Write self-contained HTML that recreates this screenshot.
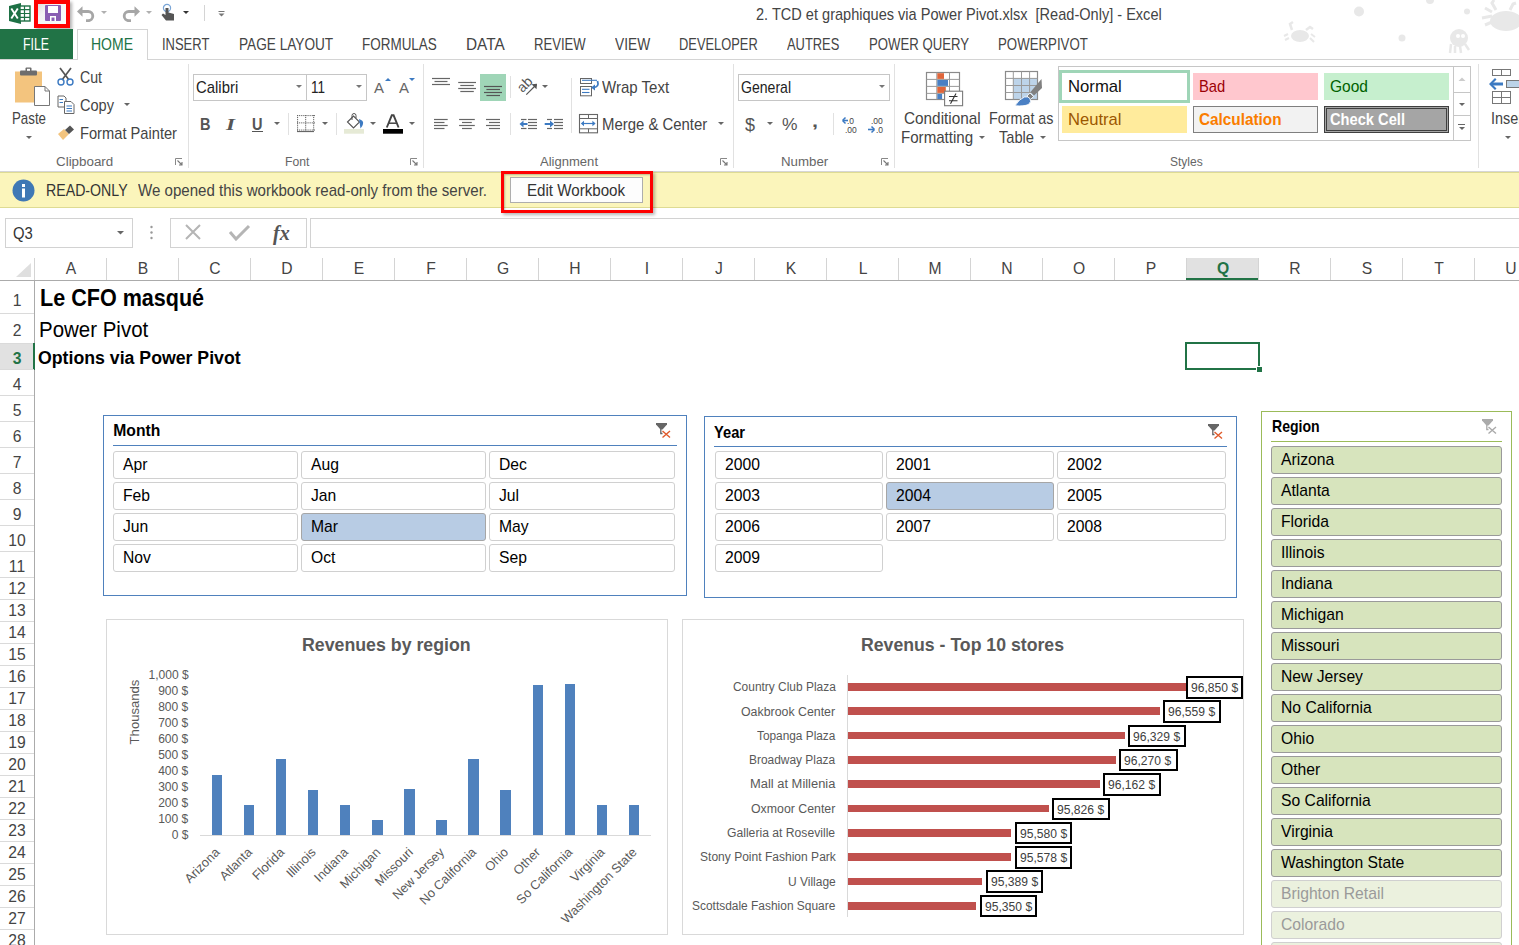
<!DOCTYPE html>
<html><head><meta charset="utf-8"><style>
html,body{margin:0;padding:0;width:1519px;height:945px;overflow:hidden;background:#fff;position:relative;font-family:"Liberation Sans",sans-serif;}
.t{position:absolute;white-space:pre;line-height:1;}
</style></head><body>
<svg style="position:absolute;left:1280px;top:0px;" width="239" height="56" viewBox="0 0 239 56">
<g fill="#e8e8e8">
<circle cx="79" cy="11.5" r="5"/>
<circle cx="122" cy="38" r="3.5"/>
<circle cx="150" cy="0" r="4"/>
<circle cx="187" cy="11.5" r="3"/>
<!-- crab1 -->
<ellipse cx="20" cy="36" rx="9" ry="6"/>
<path d="M8 34 L4 36 M9 38 L5 40 M31 34 L35 37 M30 38 L34 42" stroke="#e8e8e8" stroke-width="2"/>
<path d="M12 30 L10 24 L13 22 M26 30 L30 27 L33 29" stroke="#e8e8e8" stroke-width="2.5" fill="none"/>
<!-- skull octopus -->
<ellipse cx="179" cy="38" rx="9" ry="9"/>
<path d="M171 44 L170 53 M175 46 L175 53 M180 46 L181 53 M185 44 L189 50" stroke="#e8e8e8" stroke-width="2.5"/>
<!-- crab2 -->
<ellipse cx="226" cy="21" rx="16" ry="10"/>
<path d="M212 16 L202 18 M212 22 L205 25 M212 12 L205 8" stroke="#e8e8e8" stroke-width="3"/>
<path d="M216 10 L212 3 L214 0 M230 10 L233 4 L236 3" stroke="#e8e8e8" stroke-width="3" fill="none"/>
</g>
<ellipse cx="178" cy="36" rx="2" ry="2" fill="#fff"/><ellipse cx="183" cy="36" rx="2" ry="2" fill="#fff"/>
</svg>
<svg style="position:absolute;left:9px;top:3px;" width="22" height="21" viewBox="0 0 22 21">
<path d="M0 3 L12 0 L12 21 L0 18 Z" fill="#1e7145"/>
<rect x="11" y="3" width="10" height="15" fill="#fff" stroke="#1e7145" stroke-width="1.4"/>
<path d="M11 6.7 H21 M11 10.5 H21 M11 14.3 H21 M15.5 3 V18" stroke="#1e7145" stroke-width="1.2"/>
<path d="M2.3 5.5 L5.5 10.5 L2.3 15.5 M8.8 5.5 L5.6 10.5 L8.8 15.5" stroke="#fff" stroke-width="1.9" fill="none"/>
</svg>
<div style="position:absolute;left:37px;top:3px;width:31px;height:23px;background:linear-gradient(135deg,#dcdcdc 0%,#f4f4f4 30%,#fafafa 100%)"></div>
<svg style="position:absolute;left:44px;top:4px;" width="19" height="19" viewBox="0 0 19 19">
<rect x="1" y="1" width="16" height="16" rx="1" fill="#8a5fb3"/>
<rect x="4" y="2" width="10" height="7" fill="#fff"/>
<rect x="6" y="12" width="6" height="5" fill="#fff"/>
<rect x="7.5" y="13.5" width="3" height="3.5" fill="#8a5fb3"/>
</svg>
<div style="position:absolute;left:34px;top:0px;width:36px;height:28px;border:4px solid #f00;box-sizing:border-box;box-shadow:2px 2px 3px rgba(0,0,0,0.3)"></div>
<svg style="position:absolute;left:76px;top:5px;" width="20" height="17" viewBox="0 0 20 17"><path d="M5 6.5 H12.2 A4.6 4.6 0 0 1 12.2 15.7 H10" stroke="#a6a6a6" stroke-width="2.8" fill="none"/><path d="M1 6.5 L6.5 1.3 L6.5 11.7 Z" fill="#a6a6a6"/></svg>
<svg style="position:absolute;left:100px;top:10px;" width="8" height="6" viewBox="0 0 8 6"><path d="M1 1 L7 1 L4 4 Z" fill="#b0b0b0"/></svg>
<svg style="position:absolute;left:121px;top:5px;" width="20" height="17" viewBox="0 0 20 17"><path d="M15 6.5 H7.8 A4.6 4.6 0 0 0 7.8 15.7 H10" stroke="#a6a6a6" stroke-width="2.8" fill="none"/><path d="M19 6.5 L13.5 1.3 L13.5 11.7 Z" fill="#a6a6a6"/></svg>
<svg style="position:absolute;left:145px;top:10px;" width="8" height="6" viewBox="0 0 8 6"><path d="M1 1 L7 1 L4 4 Z" fill="#b0b0b0"/></svg>
<svg style="position:absolute;left:160px;top:3px;" width="18" height="19" viewBox="0 0 18 19"><circle cx="7" cy="5" r="3.6" stroke="#7aa5d6" stroke-width="1.2" fill="none"/>
<path d="M5.5 5 V12 L3 10.5 L1.5 12 L6 17.5 H14 V11 L8.5 9.5 V5 Z" fill="#555"/></svg>
<svg style="position:absolute;left:182px;top:10px;" width="8" height="6" viewBox="0 0 8 6"><path d="M1 1 L7 1 L4 4 Z" fill="#333"/></svg>
<div style="position:absolute;left:204px;top:5px;width:1px;height:16px;background:#d4d4d4"></div>
<svg style="position:absolute;left:218px;top:10px;" width="8" height="8" viewBox="0 0 8 8"><path d="M0.5 1.5 H6.5" stroke="#777" stroke-width="1"/><path d="M0.5 3.5 H6.5 L3.5 6.5 Z" fill="#777"/></svg>
<div class="t" style="left:756.00px;top:7.00px;font-size:15.70px;font-weight:normal;color:#444;font-family:'Liberation Sans',sans-serif;transform:scaleX(0.9276);transform-origin:0 0;">2. TCD et graphiques via Power Pivot.xlsx  [Read-Only] - Excel</div>
<div style="position:absolute;left:0px;top:29px;width:73px;height:31px;background:#217346"></div>
<div class="t" style="left:23.40px;top:37.00px;font-size:15.70px;font-weight:normal;color:#fff;font-family:'Liberation Sans',sans-serif;transform:scaleX(0.7848);transform-origin:0 0;">FILE</div>
<div style="position:absolute;left:77px;top:29px;width:71px;height:31px;border:1px solid #d4d4d4;border-bottom:none;box-sizing:border-box;background:#fff"></div>
<div style="position:absolute;left:0px;top:59px;width:77px;height:1px;background:#d4d4d4"></div>
<div style="position:absolute;left:148px;top:59px;width:1371px;height:1px;background:#d4d4d4"></div>
<div class="t" style="left:91.00px;top:37.00px;font-size:15.70px;font-weight:normal;color:#217346;font-family:'Liberation Sans',sans-serif;transform:scaleX(0.8924);transform-origin:0 0;">HOME</div>
<div class="t" style="left:162.40px;top:37.00px;font-size:15.70px;font-weight:normal;color:#444;font-family:'Liberation Sans',sans-serif;transform:scaleX(0.8263);transform-origin:0 0;">INSERT</div>
<div class="t" style="left:238.70px;top:37.00px;font-size:15.70px;font-weight:normal;color:#444;font-family:'Liberation Sans',sans-serif;transform:scaleX(0.8691);transform-origin:0 0;">PAGE LAYOUT</div>
<div class="t" style="left:361.80px;top:37.00px;font-size:15.70px;font-weight:normal;color:#444;font-family:'Liberation Sans',sans-serif;transform:scaleX(0.8582);transform-origin:0 0;">FORMULAS</div>
<div class="t" style="left:465.80px;top:37.00px;font-size:15.70px;font-weight:normal;color:#444;font-family:'Liberation Sans',sans-serif;transform:scaleX(0.9795);transform-origin:0 0;">DATA</div>
<div class="t" style="left:534.00px;top:37.00px;font-size:15.70px;font-weight:normal;color:#444;font-family:'Liberation Sans',sans-serif;transform:scaleX(0.8354);transform-origin:0 0;">REVIEW</div>
<div class="t" style="left:614.70px;top:37.00px;font-size:15.70px;font-weight:normal;color:#444;font-family:'Liberation Sans',sans-serif;transform:scaleX(0.8755);transform-origin:0 0;">VIEW</div>
<div class="t" style="left:679.20px;top:37.00px;font-size:15.70px;font-weight:normal;color:#444;font-family:'Liberation Sans',sans-serif;transform:scaleX(0.8206);transform-origin:0 0;">DEVELOPER</div>
<div class="t" style="left:787.30px;top:37.00px;font-size:15.70px;font-weight:normal;color:#444;font-family:'Liberation Sans',sans-serif;transform:scaleX(0.8219);transform-origin:0 0;">AUTRES</div>
<div class="t" style="left:869.40px;top:37.00px;font-size:15.70px;font-weight:normal;color:#444;font-family:'Liberation Sans',sans-serif;transform:scaleX(0.8394);transform-origin:0 0;">POWER QUERY</div>
<div class="t" style="left:998.00px;top:37.00px;font-size:15.70px;font-weight:normal;color:#444;font-family:'Liberation Sans',sans-serif;transform:scaleX(0.8445);transform-origin:0 0;">POWERPIVOT</div>
<div style="position:absolute;left:0px;top:171px;width:1519px;height:1px;background:#d6d6d6"></div>
<div style="position:absolute;left:188px;top:64px;width:1px;height:104px;background:#e1e1e1"></div>
<div style="position:absolute;left:423px;top:64px;width:1px;height:104px;background:#e1e1e1"></div>
<div style="position:absolute;left:733px;top:64px;width:1px;height:104px;background:#e1e1e1"></div>
<div style="position:absolute;left:894px;top:64px;width:1px;height:104px;background:#e1e1e1"></div>
<div style="position:absolute;left:1478px;top:64px;width:1px;height:104px;background:#e1e1e1"></div>
<svg style="position:absolute;left:14px;top:67px;" width="37" height="40" viewBox="0 0 37 40">
<rect x="1" y="4.5" width="27" height="31" fill="#f3c47e"/>
<rect x="6" y="3.5" width="17" height="5" rx="1" fill="#6d6d6d"/>
<rect x="11.5" y="0.5" width="6" height="4" rx="1" fill="#6d6d6d"/>
<rect x="13" y="1.8" width="3" height="2" fill="#fff"/>
<path d="M20.5 19.5 H31 L35.5 24 V38.5 H20.5 Z" fill="#fff" stroke="#777" stroke-width="1"/>
<path d="M31 19.5 V24 H35.5" fill="none" stroke="#777" stroke-width="1"/>
</svg>
<div class="t" style="left:11.50px;top:111.00px;font-size:15.70px;font-weight:normal;color:#444;font-family:'Liberation Sans',sans-serif;transform:scaleX(0.8476);transform-origin:0 0;">Paste</div>
<svg style="position:absolute;left:25px;top:135px;" width="8" height="6" viewBox="0 0 8 6"><path d="M1 1 L7 1 L4 4 Z" fill="#666"/></svg>
<svg style="position:absolute;left:56px;top:67px;" width="20" height="20" viewBox="0 0 20 20"><path d="M4 1 L13 13 M15 1 L6 13" stroke="#555" stroke-width="1.7"/>
<circle cx="5" cy="15" r="3" fill="none" stroke="#3c7ac2" stroke-width="1.4"/><circle cx="14" cy="15" r="3" fill="none" stroke="#3c7ac2" stroke-width="1.4"/></svg>
<div class="t" style="left:80.00px;top:70.00px;font-size:15.70px;font-weight:normal;color:#444;font-family:'Liberation Sans',sans-serif;transform:scaleX(0.9012);transform-origin:0 0;">Cut</div>
<svg style="position:absolute;left:57px;top:95px;" width="19" height="20" viewBox="0 0 19 20"><path d="M1 1 H7 L9 3 V12 H1 Z" fill="#fff" stroke="#666" stroke-width="1"/>
<path d="M2.5 4.5 H6 M2.5 7.5 H6" stroke="#3c7ac2" stroke-width="1"/>
<path d="M7.5 6.5 H14 L17 9.5 V18.5 H7.5 Z" fill="#fff" stroke="#666" stroke-width="1"/>
<path d="M9.5 11 H15 M9.5 13.5 H15 M9.5 16 H15" stroke="#3c7ac2" stroke-width="1.1"/></svg>
<div class="t" style="left:80.00px;top:98.00px;font-size:15.70px;font-weight:normal;color:#444;font-family:'Liberation Sans',sans-serif;transform:scaleX(0.9284);transform-origin:0 0;">Copy</div>
<svg style="position:absolute;left:123px;top:102px;" width="8" height="6" viewBox="0 0 8 6"><path d="M1 1 L7 1 L4 4 Z" fill="#666"/></svg>
<svg style="position:absolute;left:57px;top:124px;" width="20" height="18" viewBox="0 0 20 18"><path d="M1 10 L7 5 L12 10 L6 16 Z" fill="#f3c47e"/><path d="M8 6 L13 1.5 L17 5.5 L12 10 Z" fill="#555"/></svg>
<div class="t" style="left:80.00px;top:126.00px;font-size:15.70px;font-weight:normal;color:#444;font-family:'Liberation Sans',sans-serif;transform:scaleX(0.9350);transform-origin:0 0;">Format Painter</div>
<div class="t" style="left:55.60px;top:156.00px;font-size:12.65px;font-weight:normal;color:#666;font-family:'Liberation Sans',sans-serif;transform:scaleX(1.0585);transform-origin:0 0;">Clipboard</div>
<svg style="position:absolute;left:175px;top:158px;" width="8" height="8" viewBox="0 0 8 8"><path d="M0.5 0.5 H7 M0.5 0.5 V7" stroke="#888" stroke-width="1"/><path d="M2.5 2.5 L7 7 M7 4 V7 H4" stroke="#777" stroke-width="1.1" fill="none"/></svg>
<div style="position:absolute;left:193px;top:74px;width:114px;height:27px;border:1px solid #c6c6c6;box-sizing:border-box;background:#fff"></div>
<div style="position:absolute;left:306px;top:74px;width:61px;height:27px;border:1px solid #c6c6c6;box-sizing:border-box;background:#fff"></div>
<div class="t" style="left:196.00px;top:80.00px;font-size:15.70px;font-weight:normal;color:#222;font-family:'Liberation Sans',sans-serif;transform:scaleX(0.9492);transform-origin:0 0;">Calibri</div>
<div class="t" style="left:311.00px;top:80.00px;font-size:15.70px;font-weight:normal;color:#222;font-family:'Liberation Sans',sans-serif;transform:scaleX(0.8597);transform-origin:0 0;">11</div>
<svg style="position:absolute;left:295px;top:84px;" width="8" height="6" viewBox="0 0 8 6"><path d="M1 1 L7 1 L4 4 Z" fill="#777"/></svg>
<svg style="position:absolute;left:355px;top:84px;" width="8" height="6" viewBox="0 0 8 6"><path d="M1 1 L7 1 L4 4 Z" fill="#777"/></svg>
<svg style="position:absolute;left:373px;top:77px;" width="18" height="18" viewBox="0 0 18 18"><text x="1" y="16" font-family="Liberation Sans" font-size="15" fill="#666">A</text><path d="M12 4 L15 1 L18 4 Z" fill="#3c7ac2"/></svg>
<svg style="position:absolute;left:398px;top:77px;" width="18" height="18" viewBox="0 0 18 18"><text x="1" y="16" font-family="Liberation Sans" font-size="15" fill="#666">A</text><path d="M11 1 H17 L14 4 Z" fill="#3c7ac2"/></svg>
<div class="t" style="left:199.50px;top:116.00px;font-size:17.01px;font-weight:bold;color:#555;font-family:'Liberation Sans',sans-serif;transform:scaleX(0.8553);transform-origin:0 0;">B</div>
<div class="t" style="left:226.00px;top:116.00px;font-size:17.01px;font-weight:bold;color:#555;font-family:'Liberation Serif',sans-serif;font-style:italic;transform:scaleX(1.3604);transform-origin:0 0;">I</div>
<div class="t" style="left:252.00px;top:116.00px;font-size:17.01px;font-weight:bold;color:#555;font-family:'Liberation Sans',sans-serif;transform:scaleX(0.8553);transform-origin:0 0;">U</div>
<div style="position:absolute;left:252px;top:131px;width:11px;height:1px;background:#555"></div>
<svg style="position:absolute;left:273px;top:121px;" width="8" height="6" viewBox="0 0 8 6"><path d="M1 1 L7 1 L4 4 Z" fill="#666"/></svg>
<div style="position:absolute;left:288px;top:113px;width:1px;height:22px;background:#e1e1e1"></div>
<svg style="position:absolute;left:296px;top:114px;" width="19" height="19" viewBox="0 0 19 19"><rect x="1.0" y="1.0" width="1.1" height="1.1" fill="#666"/><rect x="3.1" y="1.0" width="1.1" height="1.1" fill="#666"/><rect x="5.2" y="1.0" width="1.1" height="1.1" fill="#666"/><rect x="7.3" y="1.0" width="1.1" height="1.1" fill="#666"/><rect x="9.4" y="1.0" width="1.1" height="1.1" fill="#666"/><rect x="11.5" y="1.0" width="1.1" height="1.1" fill="#666"/><rect x="13.6" y="1.0" width="1.1" height="1.1" fill="#666"/><rect x="15.7" y="1.0" width="1.1" height="1.1" fill="#666"/><rect x="17.8" y="1.0" width="1.1" height="1.1" fill="#666"/><rect x="1.0" y="8.3" width="1.1" height="1.1" fill="#666"/><rect x="3.1" y="8.3" width="1.1" height="1.1" fill="#666"/><rect x="5.2" y="8.3" width="1.1" height="1.1" fill="#666"/><rect x="7.3" y="8.3" width="1.1" height="1.1" fill="#666"/><rect x="9.4" y="8.3" width="1.1" height="1.1" fill="#666"/><rect x="11.5" y="8.3" width="1.1" height="1.1" fill="#666"/><rect x="13.6" y="8.3" width="1.1" height="1.1" fill="#666"/><rect x="15.7" y="8.3" width="1.1" height="1.1" fill="#666"/><rect x="17.8" y="8.3" width="1.1" height="1.1" fill="#666"/><rect x="1.0" y="15.5" width="1.1" height="1.1" fill="#666"/><rect x="3.1" y="15.5" width="1.1" height="1.1" fill="#666"/><rect x="5.2" y="15.5" width="1.1" height="1.1" fill="#666"/><rect x="7.3" y="15.5" width="1.1" height="1.1" fill="#666"/><rect x="9.4" y="15.5" width="1.1" height="1.1" fill="#666"/><rect x="11.5" y="15.5" width="1.1" height="1.1" fill="#666"/><rect x="13.6" y="15.5" width="1.1" height="1.1" fill="#666"/><rect x="15.7" y="15.5" width="1.1" height="1.1" fill="#666"/><rect x="17.8" y="15.5" width="1.1" height="1.1" fill="#666"/><rect x="1.0" y="1.0" width="1.1" height="1.1" fill="#666"/><rect x="1.0" y="3.0" width="1.1" height="1.1" fill="#666"/><rect x="1.0" y="5.1" width="1.1" height="1.1" fill="#666"/><rect x="1.0" y="7.2" width="1.1" height="1.1" fill="#666"/><rect x="1.0" y="9.2" width="1.1" height="1.1" fill="#666"/><rect x="1.0" y="11.2" width="1.1" height="1.1" fill="#666"/><rect x="1.0" y="13.3" width="1.1" height="1.1" fill="#666"/><rect x="1.0" y="15.3" width="1.1" height="1.1" fill="#666"/><rect x="9.1" y="1.0" width="1.1" height="1.1" fill="#666"/><rect x="9.1" y="3.0" width="1.1" height="1.1" fill="#666"/><rect x="9.1" y="5.1" width="1.1" height="1.1" fill="#666"/><rect x="9.1" y="7.2" width="1.1" height="1.1" fill="#666"/><rect x="9.1" y="9.2" width="1.1" height="1.1" fill="#666"/><rect x="9.1" y="11.2" width="1.1" height="1.1" fill="#666"/><rect x="9.1" y="13.3" width="1.1" height="1.1" fill="#666"/><rect x="9.1" y="15.3" width="1.1" height="1.1" fill="#666"/><rect x="17.1" y="1.0" width="1.1" height="1.1" fill="#666"/><rect x="17.1" y="3.0" width="1.1" height="1.1" fill="#666"/><rect x="17.1" y="5.1" width="1.1" height="1.1" fill="#666"/><rect x="17.1" y="7.2" width="1.1" height="1.1" fill="#666"/><rect x="17.1" y="9.2" width="1.1" height="1.1" fill="#666"/><rect x="17.1" y="11.2" width="1.1" height="1.1" fill="#666"/><rect x="17.1" y="13.3" width="1.1" height="1.1" fill="#666"/><rect x="17.1" y="15.3" width="1.1" height="1.1" fill="#666"/><rect x="1" y="17" width="17" height="1.1" fill="#666"/></svg>
<svg style="position:absolute;left:321px;top:121px;" width="8" height="6" viewBox="0 0 8 6"><path d="M1 1 L7 1 L4 4 Z" fill="#666"/></svg>
<div style="position:absolute;left:336px;top:113px;width:1px;height:22px;background:#e1e1e1"></div>
<svg style="position:absolute;left:343px;top:112px;" width="23" height="23" viewBox="0 0 23 23"><rect x="1" y="17" width="20" height="4.7" fill="#e6ead6"/>
<path d="M4.5 10 L10.5 4 L16.5 10 L10.5 16 Z" fill="#fff" stroke="#555" stroke-width="1.1"/>
<path d="M9 8 V3.5 Q9 1.5 11 1.5 Q13 1.5 13 3.5 V6" stroke="#555" stroke-width="1" fill="none"/>
<path d="M16 7 Q21 8.5 20 12 Q19.5 14.5 17.5 16.5 L16.5 10 Z" fill="#3c7ac2"/></svg>
<svg style="position:absolute;left:369px;top:121px;" width="8" height="6" viewBox="0 0 8 6"><path d="M1 1 L7 1 L4 4 Z" fill="#666"/></svg>
<svg style="position:absolute;left:382px;top:113px;" width="22" height="22" viewBox="0 0 22 22"><path d="M4.8 14.5 L9.8 2.3 H11.6 L16.6 14.5" stroke="#444" stroke-width="1.9" fill="none"/><path d="M7 10.2 H14.4" stroke="#444" stroke-width="1.5"/>
<rect x="1" y="16" width="20" height="4.7" fill="#000"/></svg>
<svg style="position:absolute;left:408px;top:121px;" width="8" height="6" viewBox="0 0 8 6"><path d="M1 1 L7 1 L4 4 Z" fill="#666"/></svg>
<div class="t" style="left:284.50px;top:156.00px;font-size:12.06px;font-weight:normal;color:#666;font-family:'Liberation Sans',sans-serif;transform:scaleX(1.0122);transform-origin:0 0;">Font</div>
<svg style="position:absolute;left:410px;top:158px;" width="8" height="8" viewBox="0 0 8 8"><path d="M0.5 0.5 H7 M0.5 0.5 V7" stroke="#888" stroke-width="1"/><path d="M2.5 2.5 L7 7 M7 4 V7 H4" stroke="#777" stroke-width="1.1" fill="none"/></svg>
<div style="position:absolute;left:480px;top:74px;width:26px;height:27px;background:#9fd5b7"></div>
<svg style="position:absolute;left:425px;top:68px;" width="180" height="72" viewBox="0 0 180 72"><path d="M7.00 10.50 H25.00" stroke="#666" stroke-width="1.2"/><path d="M9.50 13.50 H22.50" stroke="#666" stroke-width="1.2"/><path d="M7.00 16.50 H25.00" stroke="#666" stroke-width="1.2"/><path d="M33.20 14.50 H51.00" stroke="#666" stroke-width="1.2"/><path d="M35.30 17.50 H48.80" stroke="#666" stroke-width="1.2"/><path d="M33.20 20.50 H51.00" stroke="#666" stroke-width="1.2"/><path d="M35.30 23.50 H48.80" stroke="#666" stroke-width="1.2"/><path d="M59.00 18.50 H77.00" stroke="#555" stroke-width="1.2"/><path d="M61.40 21.50 H75.00" stroke="#555" stroke-width="1.2"/><path d="M59.00 24.50 H77.00" stroke="#555" stroke-width="1.2"/><path d="M61.40 27.50 H75.00" stroke="#555" stroke-width="1.2"/><path d="M9.00 51.50 H22.70" stroke="#666" stroke-width="1.2"/><path d="M9.00 54.50 H19.50" stroke="#666" stroke-width="1.2"/><path d="M9.00 57.50 H22.70" stroke="#666" stroke-width="1.2"/><path d="M9.00 60.50 H19.50" stroke="#666" stroke-width="1.2"/><path d="M34.10 51.50 H49.80" stroke="#666" stroke-width="1.2"/><path d="M37.00 54.50 H46.80" stroke="#666" stroke-width="1.2"/><path d="M34.10 57.50 H49.80" stroke="#666" stroke-width="1.2"/><path d="M37.00 60.50 H46.80" stroke="#666" stroke-width="1.2"/><path d="M61.00 51.50 H75.00" stroke="#666" stroke-width="1.2"/><path d="M64.00 54.50 H75.00" stroke="#666" stroke-width="1.2"/><path d="M61.00 57.50 H75.00" stroke="#666" stroke-width="1.2"/><path d="M64.00 60.50 H75.00" stroke="#666" stroke-width="1.2"/><path d="M96.00 51.50 H101.50" stroke="#666" stroke-width="1.2"/><path d="M103.00 51.50 H112.00" stroke="#666" stroke-width="1.2"/><path d="M103.00 54.50 H112.00" stroke="#666" stroke-width="1.2"/><path d="M103.00 57.50 H112.00" stroke="#666" stroke-width="1.2"/><path d="M96.00 60.50 H101.50" stroke="#666" stroke-width="1.2"/><path d="M103.00 60.50 H112.00" stroke="#666" stroke-width="1.2"/><path d="M96 56 H102.5" stroke="#3c7ac2" stroke-width="2"/><path d="M94.5 56 L98.5 52.5 V59.5 Z" fill="#3c7ac2"/><path d="M122.00 51.50 H127.00" stroke="#666" stroke-width="1.2"/><path d="M129.00 51.50 H138.00" stroke="#666" stroke-width="1.2"/><path d="M129.00 54.50 H138.00" stroke="#666" stroke-width="1.2"/><path d="M129.00 57.50 H138.00" stroke="#666" stroke-width="1.2"/><path d="M122.00 60.50 H127.00" stroke="#666" stroke-width="1.2"/><path d="M129.00 60.50 H138.00" stroke="#666" stroke-width="1.2"/><path d="M119.70000000000005 56 H126" stroke="#3c7ac2" stroke-width="2"/><path d="M129 56 L125 52.5 V59.5 Z" fill="#3c7ac2"/><text x="0" y="0" font-family="Liberation Sans" font-size="14" fill="#555" transform="translate(97.6 25.2) rotate(-45)">ab</text><path d="M101.29999999999995 26.700000000000003 L111.5 16.5" stroke="#555" stroke-width="1.2"/><path d="M106.5 16.3 L112 15.8 L111.5 21.3 Z" fill="#555"/><rect x="155.5" y="10.5" width="11" height="5" fill="#fff" stroke="#666" stroke-width="1"/><rect x="155.5" y="18.5" width="11" height="9.3" fill="#fff" stroke="#666" stroke-width="1"/><path d="M157.00 12.30 H172.00" stroke="#3c7ac2" stroke-width="1.1"/><path d="M157.00 21.30 H164.50" stroke="#3c7ac2" stroke-width="1.1"/><path d="M157.00 24.50 H164.50" stroke="#3c7ac2" stroke-width="1.1"/><path d="M172.5 13 Q174.5 19 168.5 19.5" stroke="#3c7ac2" stroke-width="1.8" fill="none"/><path d="M166 19.5 L170 16.5 V22.5 Z" fill="#3c7ac2"/><rect x="154.5" y="46.5" width="18" height="18.3" fill="#fff" stroke="#666" stroke-width="1.1"/><path d="M154.50 50.50 H172.50" stroke="#666" stroke-width="1"/><path d="M154.50 60.80 H172.50" stroke="#666" stroke-width="1"/><path d="M163.5 46.5 V50.5 M163.5 60.80000000000001 V64.80000000000001" stroke="#666" stroke-width="1"/><path d="M157.50 55.50 H168.80" stroke="#3c7ac2" stroke-width="1.2"/><path d="M155.79999999999995 55.5 L159 52.8 V58.2 Z M170.60000000000002 55.5 L167.39999999999998 52.8 V58.2 Z" fill="#3c7ac2"/></svg>
<div style="position:absolute;left:510px;top:76px;width:1px;height:22px;background:#e1e1e1"></div>
<svg style="position:absolute;left:541px;top:84px;" width="8" height="6" viewBox="0 0 8 6"><path d="M1 1 L7 1 L4 4 Z" fill="#666"/></svg>
<div style="position:absolute;left:571px;top:78px;width:1px;height:55px;background:#e1e1e1"></div>
<div class="t" style="left:602.40px;top:80.00px;font-size:15.70px;font-weight:normal;color:#444;font-family:'Liberation Sans',sans-serif;transform:scaleX(0.9584);transform-origin:0 0;">Wrap Text</div>
<div style="position:absolute;left:510px;top:113px;width:1px;height:22px;background:#e1e1e1"></div>
<div class="t" style="left:602.40px;top:117.00px;font-size:15.70px;font-weight:normal;color:#444;font-family:'Liberation Sans',sans-serif;transform:scaleX(0.9500);transform-origin:0 0;">Merge &amp; Center</div>
<svg style="position:absolute;left:717px;top:121px;" width="8" height="6" viewBox="0 0 8 6"><path d="M1 1 L7 1 L4 4 Z" fill="#666"/></svg>
<div class="t" style="left:540.00px;top:156.00px;font-size:12.06px;font-weight:normal;color:#666;font-family:'Liberation Sans',sans-serif;transform:scaleX(1.0827);transform-origin:0 0;">Alignment</div>
<svg style="position:absolute;left:720px;top:158px;" width="8" height="8" viewBox="0 0 8 8"><path d="M0.5 0.5 H7 M0.5 0.5 V7" stroke="#888" stroke-width="1"/><path d="M2.5 2.5 L7 7 M7 4 V7 H4" stroke="#777" stroke-width="1.1" fill="none"/></svg>
<div style="position:absolute;left:738px;top:74px;width:152px;height:27px;border:1px solid #c6c6c6;box-sizing:border-box;background:#fff"></div>
<div class="t" style="left:741.00px;top:80.00px;font-size:15.70px;font-weight:normal;color:#222;font-family:'Liberation Sans',sans-serif;transform:scaleX(0.8959);transform-origin:0 0;">General</div>
<svg style="position:absolute;left:878px;top:84px;" width="8" height="6" viewBox="0 0 8 6"><path d="M1 1 L7 1 L4 4 Z" fill="#777"/></svg>
<div class="t" style="left:745.00px;top:116.00px;font-size:18.90px;font-weight:normal;color:#555;font-family:'Liberation Sans',sans-serif;transform:scaleX(0.9526);transform-origin:0 0;">$</div>
<svg style="position:absolute;left:766px;top:121px;" width="8" height="6" viewBox="0 0 8 6"><path d="M1 1 L7 1 L4 4 Z" fill="#666"/></svg>
<div class="t" style="left:781.50px;top:117.00px;font-size:16.72px;font-weight:normal;color:#555;font-family:'Liberation Sans',sans-serif;transform:scaleX(1.0436);transform-origin:0 0;">%</div>
<div class="t" style="left:812.00px;top:114.00px;font-size:16.00px;font-weight:bold;color:#555;font-family:'Liberation Sans',sans-serif;transform:scaleX(1.3497);transform-origin:0 0;">,</div>
<div style="position:absolute;left:833px;top:113px;width:1px;height:22px;background:#e1e1e1"></div>
<svg style="position:absolute;left:842px;top:116px;" width="17" height="18" viewBox="0 0 17 18"><text x="5" y="8" font-family="Liberation Sans" font-size="8.5" fill="#444">.0</text><text x="3" y="17" font-family="Liberation Sans" font-size="8.5" fill="#444">.00</text>
<path d="M1 4.5 H6" stroke="#3c7ac2" stroke-width="1.6"/><path d="M0.5 4.5 L3.5 1.5 M0.5 4.5 L3.5 7.5" stroke="#3c7ac2" stroke-width="1.5"/></svg>
<svg style="position:absolute;left:868px;top:116px;" width="17" height="18" viewBox="0 0 17 18"><text x="3" y="8" font-family="Liberation Sans" font-size="8.5" fill="#444">.00</text><text x="8" y="17" font-family="Liberation Sans" font-size="8.5" fill="#444">.0</text>
<path d="M0 13.5 H6" stroke="#3c7ac2" stroke-width="1.6"/><path d="M6.5 13.5 L3.5 10.5 M6.5 13.5 L3.5 16.5" stroke="#3c7ac2" stroke-width="1.5"/></svg>
<div class="t" style="left:780.60px;top:156.00px;font-size:12.06px;font-weight:normal;color:#666;font-family:'Liberation Sans',sans-serif;transform:scaleX(1.1016);transform-origin:0 0;">Number</div>
<svg style="position:absolute;left:881px;top:158px;" width="8" height="8" viewBox="0 0 8 8"><path d="M0.5 0.5 H7 M0.5 0.5 V7" stroke="#888" stroke-width="1"/><path d="M2.5 2.5 L7 7 M7 4 V7 H4" stroke="#777" stroke-width="1.1" fill="none"/></svg>
<svg style="position:absolute;left:920px;top:66px;" width="130" height="44" viewBox="0 0 130 44">
<rect x="6.5" y="6.5" width="33" height="27" fill="#fff" stroke="#8a8a8a" stroke-width="1.2"/>
<path d="M16.8 6.5 V33.5 M29.5 6.5 V33.5 M6.5 13.4 H39.5 M6.5 20.4 H39.5 M6.5 27.4 H39.5" stroke="#9a9a9a" stroke-width="1"/>
<rect x="17.3" y="7.2" width="6.7" height="5.7" fill="#e0663b"/>
<rect x="17.3" y="14" width="10.7" height="5.9" fill="#4a80c4"/>
<rect x="17.3" y="21" width="8.5" height="5.9" fill="#e0663b"/>
<rect x="17.3" y="28" width="4.8" height="5" fill="#4a80c4"/>
<rect x="24.6" y="25.2" width="18" height="14.5" fill="#fff" stroke="#7a7a7a" stroke-width="1.1"/>
<path d="M29 30.5 H37.5 M29 34.8 H37.5 M30.5 37.8 L36 27.5" stroke="#333" stroke-width="1.1"/>
<rect x="86" y="78.4" width="0" height="0"/>
<rect x="93.3" y="12.4" width="24.4" height="21.2" fill="#bdd4ea"/>
<rect x="85.5" y="5.5" width="32" height="28" fill="none" stroke="#8a8a8a" stroke-width="1.2"/>
<path d="M93.3 5.5 V33.5 M101.5 5.5 V33.5 M109.6 5.5 V33.5 M85.5 12.4 H117.5 M85.5 19.5 H117.5 M85.5 26.5 H117.5" stroke="#9a9a9a" stroke-width="1"/>
<path d="M121.5 13 L122 22 L114 29.5 L110.5 26 Z" fill="#808080"/>
<path d="M110 27 L113.5 30.5 L110.5 33.5 L107 30 Z" fill="#808080" stroke="#fff" stroke-width="0.8"/>
<path d="M95 39.8 Q99 33 104.5 31 Q108 30 110 32.5 Q112 35.5 108.5 38.5 Q104 40.5 95 39.8 Z" fill="#4a80c4" stroke="#fff" stroke-width="0.9"/>
</svg>
<div class="t" style="left:903.80px;top:111.00px;font-size:15.70px;font-weight:normal;color:#444;font-family:'Liberation Sans',sans-serif;transform:scaleX(0.9772);transform-origin:0 0;">Conditional</div>
<div class="t" style="left:901.20px;top:130.00px;font-size:15.70px;font-weight:normal;color:#444;font-family:'Liberation Sans',sans-serif;transform:scaleX(0.9617);transform-origin:0 0;">Formatting</div>
<svg style="position:absolute;left:978px;top:135px;" width="8" height="6" viewBox="0 0 8 6"><path d="M1 1 L7 1 L4 4 Z" fill="#666"/></svg>
<div class="t" style="left:989.20px;top:111.00px;font-size:15.70px;font-weight:normal;color:#444;font-family:'Liberation Sans',sans-serif;transform:scaleX(0.9135);transform-origin:0 0;">Format as</div>
<div class="t" style="left:999.00px;top:130.00px;font-size:15.70px;font-weight:normal;color:#444;font-family:'Liberation Sans',sans-serif;transform:scaleX(0.9333);transform-origin:0 0;">Table</div>
<svg style="position:absolute;left:1039px;top:135px;" width="8" height="6" viewBox="0 0 8 6"><path d="M1 1 L7 1 L4 4 Z" fill="#666"/></svg>
<div style="position:absolute;left:1058px;top:66px;width:413px;height:75px;border:1px solid #c6c6c6;box-sizing:border-box;background:#fff"></div>
<div style="position:absolute;left:1059px;top:70px;width:131px;height:33px;border:3px solid #9fd5b7;box-sizing:border-box;background:#fff"></div>
<div class="t" style="left:1067.80px;top:79.00px;font-size:15.70px;font-weight:normal;color:#111;font-family:'Liberation Sans',sans-serif;transform:scaleX(1.0642);transform-origin:0 0;">Normal</div>
<div style="position:absolute;left:1193px;top:73px;width:125px;height:27px;background:#ffc7ce"></div>
<div class="t" style="left:1199.00px;top:79.00px;font-size:15.70px;font-weight:normal;color:#9c0006;font-family:'Liberation Sans',sans-serif;transform:scaleX(0.9422);transform-origin:0 0;">Bad</div>
<div style="position:absolute;left:1324px;top:73px;width:125px;height:27px;background:#c6efce"></div>
<div class="t" style="left:1329.50px;top:79.00px;font-size:15.70px;font-weight:normal;color:#006100;font-family:'Liberation Sans',sans-serif;transform:scaleX(0.9902);transform-origin:0 0;">Good</div>
<div style="position:absolute;left:1062px;top:106px;width:125px;height:27px;background:#ffeb9c"></div>
<div class="t" style="left:1067.80px;top:112.00px;font-size:15.70px;font-weight:normal;color:#9c5700;font-family:'Liberation Sans',sans-serif;transform:scaleX(1.0579);transform-origin:0 0;">Neutral</div>
<div style="position:absolute;left:1193px;top:106px;width:125px;height:27px;border:1px solid #7f7f7f;box-sizing:border-box;background:#f2f2f2"></div>
<div class="t" style="left:1198.60px;top:112.00px;font-size:15.70px;font-weight:bold;color:#fa7d00;font-family:'Liberation Sans',sans-serif;transform:scaleX(0.9769);transform-origin:0 0;">Calculation</div>
<div style="position:absolute;left:1324px;top:106px;width:125px;height:27px;border:3px double #3f3f3f;box-sizing:border-box;background:#a5a5a5"></div>
<div class="t" style="left:1329.50px;top:112.00px;font-size:15.70px;font-weight:bold;color:#fff;font-family:'Liberation Sans',sans-serif;transform:scaleX(0.9350);transform-origin:0 0;">Check Cell</div>
<div style="position:absolute;left:1453px;top:66px;width:18px;height:75px;border:1px solid #c6c6c6;box-sizing:border-box;background:#fff"></div>
<div style="position:absolute;left:1453px;top:92px;width:18px;height:1px;background:#c6c6c6"></div>
<div style="position:absolute;left:1453px;top:115px;width:18px;height:1px;background:#c6c6c6"></div>
<svg style="position:absolute;left:1458px;top:77px;" width="8" height="5" viewBox="0 0 8 5"><path d="M0.5 4 L4 0.5 L7.5 4 Z" fill="#ccc"/></svg>
<svg style="position:absolute;left:1458px;top:102px;" width="8" height="6" viewBox="0 0 8 6"><path d="M1 1 L7 1 L4 4 Z" fill="#666"/></svg>
<div style="position:absolute;left:1458px;top:124px;width:7px;height:1px;background:#666"></div>
<svg style="position:absolute;left:1458px;top:126px;" width="8" height="6" viewBox="0 0 8 6"><path d="M1 1 L7 1 L4 4 Z" fill="#666"/></svg>
<div class="t" style="left:1170.00px;top:156.00px;font-size:12.65px;font-weight:normal;color:#666;font-family:'Liberation Sans',sans-serif;transform:scaleX(0.9511);transform-origin:0 0;">Styles</div>
<svg style="position:absolute;left:1488px;top:68px;" width="31" height="37" viewBox="0 0 31 37"><rect x="4.5" y="1.5" width="18" height="6" fill="#fff" stroke="#777"/><path d="M13.5 1.5 V7.5" stroke="#777"/>
<rect x="4.5" y="23.5" width="18" height="12" fill="#fff" stroke="#777"/><path d="M13.5 23.5 V35.5 M4.5 29.5 H22.5" stroke="#777"/>
<rect x="18.5" y="12.5" width="14" height="7" fill="#bcd3e8" stroke="#777"/>
<path d="M4 16 H15" stroke="#3c7ac2" stroke-width="3"/><path d="M1 16 L7 10 L8.5 11.5 L4 16 L8.5 20.5 L7 22 Z" fill="#3c7ac2"/></svg>
<div class="t" style="left:1490.50px;top:111.00px;font-size:15.70px;font-weight:normal;color:#444;font-family:'Liberation Sans',sans-serif;transform:scaleX(0.9176);transform-origin:0 0;">Insert</div>
<svg style="position:absolute;left:1504px;top:135px;" width="8" height="6" viewBox="0 0 8 6"><path d="M1 1 L7 1 L4 4 Z" fill="#666"/></svg>
<div style="position:absolute;left:0px;top:172px;width:1519px;height:36px;background:#fbf5bb"></div>
<div style="position:absolute;left:0px;top:172px;width:1519px;height:1px;background:#dedb93"></div>
<div style="position:absolute;left:0px;top:207px;width:1519px;height:1px;background:#dedb93"></div>
<svg style="position:absolute;left:12px;top:179px;" width="23" height="23" viewBox="0 0 23 23"><circle cx="11.5" cy="11.5" r="11" fill="#3f78b5"/><rect x="10" y="9.5" width="3" height="9" fill="#fff"/><rect x="10" y="5" width="3" height="3" fill="#fff"/></svg>
<div class="t" style="left:46.00px;top:183.00px;font-size:15.70px;font-weight:normal;color:#333;font-family:'Liberation Sans',sans-serif;transform:scaleX(0.9030);transform-origin:0 0;">READ-ONLY</div>
<div class="t" style="left:138.00px;top:183.00px;font-size:15.70px;font-weight:normal;color:#444;font-family:'Liberation Sans',sans-serif;transform:scaleX(0.9606);transform-origin:0 0;">We opened this workbook read-only from the server.</div>
<div style="position:absolute;left:510px;top:177px;width:133px;height:26px;border:1px solid #adadad;box-sizing:border-box;background:#fdfdfd"></div>
<div class="t" style="left:526.60px;top:183.00px;font-size:15.70px;font-weight:normal;color:#333;font-family:'Liberation Sans',sans-serif;transform:scaleX(0.9644);transform-origin:0 0;">Edit Workbook</div>
<div style="position:absolute;left:501px;top:171px;width:152px;height:42px;border:3.3px solid #f00;box-sizing:border-box;box-shadow:2px 2px 3px rgba(0,0,0,0.28), inset 1px 1px 2px rgba(0,0,0,0.25)"></div>
<div style="position:absolute;left:5px;top:218px;width:128px;height:30px;border:1px solid #d2d2d2;box-sizing:border-box;background:#fff"></div>
<div class="t" style="left:12.80px;top:226.00px;font-size:15.70px;font-weight:normal;color:#333;font-family:'Liberation Sans',sans-serif;transform:scaleX(0.9462);transform-origin:0 0;">Q3</div>
<svg style="position:absolute;left:115.5px;top:230px;" width="9.0" height="6.5" viewBox="0 0 9.0 6.5"><path d="M1 1 L8.0 1 L4.5 4.5 Z" fill="#666"/></svg>
<svg style="position:absolute;left:149px;top:225px;" width="5" height="16" viewBox="0 0 5 16"><circle cx="2.5" cy="2" r="1.2" fill="#999"/><circle cx="2.5" cy="7.5" r="1.2" fill="#999"/><circle cx="2.5" cy="13" r="1.2" fill="#999"/></svg>
<div style="position:absolute;left:170px;top:218px;width:137px;height:30px;border:1px solid #d2d2d2;box-sizing:border-box;background:#fff"></div>
<svg style="position:absolute;left:184px;top:223px;" width="20" height="18" viewBox="0 0 20 18"><path d="M2 2 L16 16 M16 2 L2 16" stroke="#b5b5b5" stroke-width="2"/></svg>
<svg style="position:absolute;left:228px;top:224px;" width="23" height="17" viewBox="0 0 23 17"><path d="M2 8 L8 15 L21 2" stroke="#b5b5b5" stroke-width="3" fill="none"/></svg>
<div class="t" style="left:273.00px;top:223.00px;font-size:20.00px;font-weight:bold;color:#555;font-family:'Liberation Serif',sans-serif;font-style:italic;">fx</div>
<div style="position:absolute;left:310px;top:218px;width:1230px;height:30px;border:1px solid #d2d2d2;box-sizing:border-box;background:#fff"></div>
<div style="position:absolute;left:0px;top:280px;width:1519px;height:1px;background:#ababab"></div>
<svg style="position:absolute;left:15px;top:262px;" width="17" height="16" viewBox="0 0 17 16"><path d="M16 1 L16 15 L1 15 Z" fill="#dfdfdf"/></svg>
<div style="position:absolute;left:34px;top:258px;width:1px;height:22px;background:#d4d4d4"></div>
<div class="t" style="left:65.77px;top:261.00px;font-size:15.70px;font-weight:normal;color:#444;font-family:'Liberation Sans',sans-serif;">A</div>
<div style="position:absolute;left:106px;top:258px;width:1px;height:22px;background:#d4d4d4"></div>
<div class="t" style="left:137.77px;top:261.00px;font-size:15.70px;font-weight:normal;color:#444;font-family:'Liberation Sans',sans-serif;">B</div>
<div style="position:absolute;left:178px;top:258px;width:1px;height:22px;background:#d4d4d4"></div>
<div class="t" style="left:209.34px;top:261.00px;font-size:15.70px;font-weight:normal;color:#444;font-family:'Liberation Sans',sans-serif;">C</div>
<div style="position:absolute;left:250px;top:258px;width:1px;height:22px;background:#d4d4d4"></div>
<div class="t" style="left:281.34px;top:261.00px;font-size:15.70px;font-weight:normal;color:#444;font-family:'Liberation Sans',sans-serif;">D</div>
<div style="position:absolute;left:322px;top:258px;width:1px;height:22px;background:#d4d4d4"></div>
<div class="t" style="left:353.77px;top:261.00px;font-size:15.70px;font-weight:normal;color:#444;font-family:'Liberation Sans',sans-serif;">E</div>
<div style="position:absolute;left:394px;top:258px;width:1px;height:22px;background:#d4d4d4"></div>
<div class="t" style="left:426.21px;top:261.00px;font-size:15.70px;font-weight:normal;color:#444;font-family:'Liberation Sans',sans-serif;">F</div>
<div style="position:absolute;left:466px;top:258px;width:1px;height:22px;background:#d4d4d4"></div>
<div class="t" style="left:496.90px;top:261.00px;font-size:15.70px;font-weight:normal;color:#444;font-family:'Liberation Sans',sans-serif;">G</div>
<div style="position:absolute;left:538px;top:258px;width:1px;height:22px;background:#d4d4d4"></div>
<div class="t" style="left:569.34px;top:261.00px;font-size:15.70px;font-weight:normal;color:#444;font-family:'Liberation Sans',sans-serif;">H</div>
<div style="position:absolute;left:610px;top:258px;width:1px;height:22px;background:#d4d4d4"></div>
<div class="t" style="left:644.82px;top:261.00px;font-size:15.70px;font-weight:normal;color:#444;font-family:'Liberation Sans',sans-serif;">I</div>
<div style="position:absolute;left:682px;top:258px;width:1px;height:22px;background:#d4d4d4"></div>
<div class="t" style="left:715.08px;top:261.00px;font-size:15.70px;font-weight:normal;color:#444;font-family:'Liberation Sans',sans-serif;">J</div>
<div style="position:absolute;left:754px;top:258px;width:1px;height:22px;background:#d4d4d4"></div>
<div class="t" style="left:785.77px;top:261.00px;font-size:15.70px;font-weight:normal;color:#444;font-family:'Liberation Sans',sans-serif;">K</div>
<div style="position:absolute;left:826px;top:258px;width:1px;height:22px;background:#d4d4d4"></div>
<div class="t" style="left:858.64px;top:261.00px;font-size:15.70px;font-weight:normal;color:#444;font-family:'Liberation Sans',sans-serif;">L</div>
<div style="position:absolute;left:898px;top:258px;width:1px;height:22px;background:#d4d4d4"></div>
<div class="t" style="left:928.47px;top:261.00px;font-size:15.70px;font-weight:normal;color:#444;font-family:'Liberation Sans',sans-serif;">M</div>
<div style="position:absolute;left:970px;top:258px;width:1px;height:22px;background:#d4d4d4"></div>
<div class="t" style="left:1001.34px;top:261.00px;font-size:15.70px;font-weight:normal;color:#444;font-family:'Liberation Sans',sans-serif;">N</div>
<div style="position:absolute;left:1042px;top:258px;width:1px;height:22px;background:#d4d4d4"></div>
<div class="t" style="left:1072.90px;top:261.00px;font-size:15.70px;font-weight:normal;color:#444;font-family:'Liberation Sans',sans-serif;">O</div>
<div style="position:absolute;left:1114px;top:258px;width:1px;height:22px;background:#d4d4d4"></div>
<div class="t" style="left:1145.77px;top:261.00px;font-size:15.70px;font-weight:normal;color:#444;font-family:'Liberation Sans',sans-serif;">P</div>
<div style="position:absolute;left:1186px;top:258px;width:1px;height:22px;background:#d4d4d4"></div>
<div style="position:absolute;left:1187px;top:258px;width:71px;height:22px;background:#e1e1e1"></div>
<div style="position:absolute;left:1186px;top:278px;width:72px;height:2px;background:#217346"></div>
<div class="t" style="left:1216.90px;top:261.00px;font-size:15.70px;font-weight:bold;color:#217346;font-family:'Liberation Sans',sans-serif;">Q</div>
<div style="position:absolute;left:1258px;top:258px;width:1px;height:22px;background:#d4d4d4"></div>
<div class="t" style="left:1289.34px;top:261.00px;font-size:15.70px;font-weight:normal;color:#444;font-family:'Liberation Sans',sans-serif;">R</div>
<div style="position:absolute;left:1330px;top:258px;width:1px;height:22px;background:#d4d4d4"></div>
<div class="t" style="left:1361.77px;top:261.00px;font-size:15.70px;font-weight:normal;color:#444;font-family:'Liberation Sans',sans-serif;">S</div>
<div style="position:absolute;left:1402px;top:258px;width:1px;height:22px;background:#d4d4d4"></div>
<div class="t" style="left:1434.21px;top:261.00px;font-size:15.70px;font-weight:normal;color:#444;font-family:'Liberation Sans',sans-serif;">T</div>
<div style="position:absolute;left:1474px;top:258px;width:1px;height:22px;background:#d4d4d4"></div>
<div class="t" style="left:1505.34px;top:261.00px;font-size:15.70px;font-weight:normal;color:#444;font-family:'Liberation Sans',sans-serif;">U</div>
<div style="position:absolute;left:1546px;top:258px;width:1px;height:22px;background:#d4d4d4"></div>
<div style="position:absolute;left:34px;top:280px;width:1px;height:665px;background:#ababab"></div>
<div class="t" style="left:12.64px;top:293.00px;font-size:15.70px;font-weight:normal;color:#444;font-family:'Liberation Sans',sans-serif;">1</div>
<div style="position:absolute;left:0px;top:313px;width:34px;height:1px;background:#dadada"></div>
<div class="t" style="left:12.64px;top:323.00px;font-size:15.70px;font-weight:normal;color:#444;font-family:'Liberation Sans',sans-serif;">2</div>
<div style="position:absolute;left:0px;top:343px;width:34px;height:1px;background:#dadada"></div>
<div style="position:absolute;left:0px;top:344px;width:34px;height:26px;background:#e1e1e1"></div>
<div style="position:absolute;left:33px;top:343px;width:2px;height:27px;background:#217346"></div>
<div class="t" style="left:12.64px;top:351.00px;font-size:15.70px;font-weight:bold;color:#217346;font-family:'Liberation Sans',sans-serif;">3</div>
<div style="position:absolute;left:0px;top:369px;width:34px;height:1px;background:#dadada"></div>
<div class="t" style="left:12.64px;top:377.00px;font-size:15.70px;font-weight:normal;color:#444;font-family:'Liberation Sans',sans-serif;">4</div>
<div style="position:absolute;left:0px;top:395px;width:34px;height:1px;background:#dadada"></div>
<div class="t" style="left:12.64px;top:403.00px;font-size:15.70px;font-weight:normal;color:#444;font-family:'Liberation Sans',sans-serif;">5</div>
<div style="position:absolute;left:0px;top:421px;width:34px;height:1px;background:#dadada"></div>
<div class="t" style="left:12.64px;top:429.00px;font-size:15.70px;font-weight:normal;color:#444;font-family:'Liberation Sans',sans-serif;">6</div>
<div style="position:absolute;left:0px;top:447px;width:34px;height:1px;background:#dadada"></div>
<div class="t" style="left:12.64px;top:455.00px;font-size:15.70px;font-weight:normal;color:#444;font-family:'Liberation Sans',sans-serif;">7</div>
<div style="position:absolute;left:0px;top:473px;width:34px;height:1px;background:#dadada"></div>
<div class="t" style="left:12.64px;top:481.00px;font-size:15.70px;font-weight:normal;color:#444;font-family:'Liberation Sans',sans-serif;">8</div>
<div style="position:absolute;left:0px;top:499px;width:34px;height:1px;background:#dadada"></div>
<div class="t" style="left:12.64px;top:507.00px;font-size:15.70px;font-weight:normal;color:#444;font-family:'Liberation Sans',sans-serif;">9</div>
<div style="position:absolute;left:0px;top:525px;width:34px;height:1px;background:#dadada"></div>
<div class="t" style="left:8.28px;top:533.00px;font-size:15.70px;font-weight:normal;color:#444;font-family:'Liberation Sans',sans-serif;">10</div>
<div style="position:absolute;left:0px;top:551px;width:34px;height:1px;background:#dadada"></div>
<div class="t" style="left:8.86px;top:559.00px;font-size:15.70px;font-weight:normal;color:#444;font-family:'Liberation Sans',sans-serif;">11</div>
<div style="position:absolute;left:0px;top:577px;width:34px;height:1px;background:#dadada"></div>
<div class="t" style="left:8.28px;top:581.00px;font-size:15.70px;font-weight:normal;color:#444;font-family:'Liberation Sans',sans-serif;">12</div>
<div style="position:absolute;left:0px;top:599px;width:34px;height:1px;background:#dadada"></div>
<div class="t" style="left:8.28px;top:603.00px;font-size:15.70px;font-weight:normal;color:#444;font-family:'Liberation Sans',sans-serif;">13</div>
<div style="position:absolute;left:0px;top:621px;width:34px;height:1px;background:#dadada"></div>
<div class="t" style="left:8.28px;top:625.00px;font-size:15.70px;font-weight:normal;color:#444;font-family:'Liberation Sans',sans-serif;">14</div>
<div style="position:absolute;left:0px;top:643px;width:34px;height:1px;background:#dadada"></div>
<div class="t" style="left:8.28px;top:647.00px;font-size:15.70px;font-weight:normal;color:#444;font-family:'Liberation Sans',sans-serif;">15</div>
<div style="position:absolute;left:0px;top:665px;width:34px;height:1px;background:#dadada"></div>
<div class="t" style="left:8.28px;top:669.00px;font-size:15.70px;font-weight:normal;color:#444;font-family:'Liberation Sans',sans-serif;">16</div>
<div style="position:absolute;left:0px;top:687px;width:34px;height:1px;background:#dadada"></div>
<div class="t" style="left:8.28px;top:691.00px;font-size:15.70px;font-weight:normal;color:#444;font-family:'Liberation Sans',sans-serif;">17</div>
<div style="position:absolute;left:0px;top:709px;width:34px;height:1px;background:#dadada"></div>
<div class="t" style="left:8.28px;top:713.00px;font-size:15.70px;font-weight:normal;color:#444;font-family:'Liberation Sans',sans-serif;">18</div>
<div style="position:absolute;left:0px;top:731px;width:34px;height:1px;background:#dadada"></div>
<div class="t" style="left:8.28px;top:735.00px;font-size:15.70px;font-weight:normal;color:#444;font-family:'Liberation Sans',sans-serif;">19</div>
<div style="position:absolute;left:0px;top:753px;width:34px;height:1px;background:#dadada"></div>
<div class="t" style="left:8.28px;top:757.00px;font-size:15.70px;font-weight:normal;color:#444;font-family:'Liberation Sans',sans-serif;">20</div>
<div style="position:absolute;left:0px;top:775px;width:34px;height:1px;background:#dadada"></div>
<div class="t" style="left:8.28px;top:779.00px;font-size:15.70px;font-weight:normal;color:#444;font-family:'Liberation Sans',sans-serif;">21</div>
<div style="position:absolute;left:0px;top:797px;width:34px;height:1px;background:#dadada"></div>
<div class="t" style="left:8.28px;top:801.00px;font-size:15.70px;font-weight:normal;color:#444;font-family:'Liberation Sans',sans-serif;">22</div>
<div style="position:absolute;left:0px;top:819px;width:34px;height:1px;background:#dadada"></div>
<div class="t" style="left:8.28px;top:823.00px;font-size:15.70px;font-weight:normal;color:#444;font-family:'Liberation Sans',sans-serif;">23</div>
<div style="position:absolute;left:0px;top:841px;width:34px;height:1px;background:#dadada"></div>
<div class="t" style="left:8.28px;top:845.00px;font-size:15.70px;font-weight:normal;color:#444;font-family:'Liberation Sans',sans-serif;">24</div>
<div style="position:absolute;left:0px;top:863px;width:34px;height:1px;background:#dadada"></div>
<div class="t" style="left:8.28px;top:867.00px;font-size:15.70px;font-weight:normal;color:#444;font-family:'Liberation Sans',sans-serif;">25</div>
<div style="position:absolute;left:0px;top:885px;width:34px;height:1px;background:#dadada"></div>
<div class="t" style="left:8.28px;top:889.00px;font-size:15.70px;font-weight:normal;color:#444;font-family:'Liberation Sans',sans-serif;">26</div>
<div style="position:absolute;left:0px;top:907px;width:34px;height:1px;background:#dadada"></div>
<div class="t" style="left:8.28px;top:911.00px;font-size:15.70px;font-weight:normal;color:#444;font-family:'Liberation Sans',sans-serif;">27</div>
<div style="position:absolute;left:0px;top:929px;width:34px;height:1px;background:#dadada"></div>
<div class="t" style="left:8.28px;top:933.00px;font-size:15.70px;font-weight:normal;color:#444;font-family:'Liberation Sans',sans-serif;">28</div>
<div class="t" style="left:39.60px;top:286.00px;font-size:24.13px;font-weight:bold;color:#000;font-family:'Liberation Sans',sans-serif;transform:scaleX(0.8935);transform-origin:0 0;">Le CFO masqué</div>
<div class="t" style="left:39.00px;top:319.00px;font-size:21.80px;font-weight:normal;color:#000;font-family:'Liberation Sans',sans-serif;transform:scaleX(0.9390);transform-origin:0 0;">Power Pivot</div>
<div class="t" style="left:38.40px;top:348.00px;font-size:19.19px;font-weight:bold;color:#000;font-family:'Liberation Sans',sans-serif;transform:scaleX(0.9227);transform-origin:0 0;">Options via Power Pivot</div>
<div style="position:absolute;left:1185px;top:342px;width:75px;height:28px;border:2px solid #217346;box-sizing:border-box"></div>
<div style="position:absolute;left:1256px;top:366px;width:5px;height:5px;background:#217346;border:1px solid #fff"></div>
<div style="position:absolute;left:103px;top:415px;width:584px;height:181px;border:1px solid #4f81bd;box-sizing:border-box;background:#fff"></div>
<div class="t" style="left:113.30px;top:423.00px;font-size:15.70px;font-weight:bold;color:#000;font-family:'Liberation Sans',sans-serif;">Month</div>
<div style="position:absolute;left:113px;top:445px;width:564px;height:1px;background:#4f81bd"></div>
<svg style="position:absolute;left:655px;top:422px;" width="17" height="17" viewBox="0 0 17 17"><path d="M1 1 H12 V2.5 L7.5 7.5 H5.5 L1 2.5 Z" fill="#666"/>
<path d="M5.8 7 V11.5 H7.5" stroke="#666" stroke-width="1.3" fill="none"/>
<path d="M7.5 9 L15 15.5 M7.5 15.5 L15 9" stroke="#e05a2b" stroke-width="1.4"/></svg>
<div style="position:absolute;left:113px;top:451px;width:185px;height:28px;background:#fff;border:1px solid #d0d0d0;border-radius:3px;box-sizing:border-box"></div>
<div class="t" style="left:123.00px;top:457.00px;font-size:15.70px;font-weight:normal;color:#000;font-family:'Liberation Sans',sans-serif;">Apr</div>
<div style="position:absolute;left:301px;top:451px;width:185px;height:28px;background:#fff;border:1px solid #d0d0d0;border-radius:3px;box-sizing:border-box"></div>
<div class="t" style="left:311.00px;top:457.00px;font-size:15.70px;font-weight:normal;color:#000;font-family:'Liberation Sans',sans-serif;">Aug</div>
<div style="position:absolute;left:489px;top:451px;width:186px;height:28px;background:#fff;border:1px solid #d0d0d0;border-radius:3px;box-sizing:border-box"></div>
<div class="t" style="left:499.00px;top:457.00px;font-size:15.70px;font-weight:normal;color:#000;font-family:'Liberation Sans',sans-serif;">Dec</div>
<div style="position:absolute;left:113px;top:482px;width:185px;height:28px;background:#fff;border:1px solid #d0d0d0;border-radius:3px;box-sizing:border-box"></div>
<div class="t" style="left:123.00px;top:488.00px;font-size:15.70px;font-weight:normal;color:#000;font-family:'Liberation Sans',sans-serif;">Feb</div>
<div style="position:absolute;left:301px;top:482px;width:185px;height:28px;background:#fff;border:1px solid #d0d0d0;border-radius:3px;box-sizing:border-box"></div>
<div class="t" style="left:311.00px;top:488.00px;font-size:15.70px;font-weight:normal;color:#000;font-family:'Liberation Sans',sans-serif;">Jan</div>
<div style="position:absolute;left:489px;top:482px;width:186px;height:28px;background:#fff;border:1px solid #d0d0d0;border-radius:3px;box-sizing:border-box"></div>
<div class="t" style="left:499.00px;top:488.00px;font-size:15.70px;font-weight:normal;color:#000;font-family:'Liberation Sans',sans-serif;">Jul</div>
<div style="position:absolute;left:113px;top:513px;width:185px;height:28px;background:#fff;border:1px solid #d0d0d0;border-radius:3px;box-sizing:border-box"></div>
<div class="t" style="left:123.00px;top:519.00px;font-size:15.70px;font-weight:normal;color:#000;font-family:'Liberation Sans',sans-serif;">Jun</div>
<div style="position:absolute;left:301px;top:513px;width:185px;height:28px;background:#b8cce4;border:1px solid #a6a6a6;border-radius:3px;box-sizing:border-box"></div>
<div class="t" style="left:311.00px;top:519.00px;font-size:15.70px;font-weight:normal;color:#000;font-family:'Liberation Sans',sans-serif;">Mar</div>
<div style="position:absolute;left:489px;top:513px;width:186px;height:28px;background:#fff;border:1px solid #d0d0d0;border-radius:3px;box-sizing:border-box"></div>
<div class="t" style="left:499.00px;top:519.00px;font-size:15.70px;font-weight:normal;color:#000;font-family:'Liberation Sans',sans-serif;">May</div>
<div style="position:absolute;left:113px;top:544px;width:185px;height:28px;background:#fff;border:1px solid #d0d0d0;border-radius:3px;box-sizing:border-box"></div>
<div class="t" style="left:123.00px;top:550.00px;font-size:15.70px;font-weight:normal;color:#000;font-family:'Liberation Sans',sans-serif;">Nov</div>
<div style="position:absolute;left:301px;top:544px;width:185px;height:28px;background:#fff;border:1px solid #d0d0d0;border-radius:3px;box-sizing:border-box"></div>
<div class="t" style="left:311.00px;top:550.00px;font-size:15.70px;font-weight:normal;color:#000;font-family:'Liberation Sans',sans-serif;">Oct</div>
<div style="position:absolute;left:489px;top:544px;width:186px;height:28px;background:#fff;border:1px solid #d0d0d0;border-radius:3px;box-sizing:border-box"></div>
<div class="t" style="left:499.00px;top:550.00px;font-size:15.70px;font-weight:normal;color:#000;font-family:'Liberation Sans',sans-serif;">Sep</div>
<div style="position:absolute;left:704px;top:416px;width:533px;height:182px;border:1px solid #4f81bd;box-sizing:border-box;background:#fff"></div>
<div class="t" style="left:714.40px;top:425.00px;font-size:15.70px;font-weight:bold;color:#000;font-family:'Liberation Sans',sans-serif;transform:scaleX(0.9351);transform-origin:0 0;">Year</div>
<div style="position:absolute;left:714px;top:446px;width:513px;height:1px;background:#4f81bd"></div>
<svg style="position:absolute;left:1207px;top:423px;" width="17" height="17" viewBox="0 0 17 17"><path d="M1 1 H12 V2.5 L7.5 7.5 H5.5 L1 2.5 Z" fill="#666"/>
<path d="M5.8 7 V11.5 H7.5" stroke="#666" stroke-width="1.3" fill="none"/>
<path d="M7.5 9 L15 15.5 M7.5 15.5 L15 9" stroke="#e05a2b" stroke-width="1.4"/></svg>
<div style="position:absolute;left:715px;top:451px;width:168px;height:28px;background:#fff;border:1px solid #d0d0d0;border-radius:3px;box-sizing:border-box"></div>
<div class="t" style="left:725.00px;top:457.00px;font-size:15.70px;font-weight:normal;color:#000;font-family:'Liberation Sans',sans-serif;">2000</div>
<div style="position:absolute;left:886px;top:451px;width:168px;height:28px;background:#fff;border:1px solid #d0d0d0;border-radius:3px;box-sizing:border-box"></div>
<div class="t" style="left:896.00px;top:457.00px;font-size:15.70px;font-weight:normal;color:#000;font-family:'Liberation Sans',sans-serif;">2001</div>
<div style="position:absolute;left:1057px;top:451px;width:169px;height:28px;background:#fff;border:1px solid #d0d0d0;border-radius:3px;box-sizing:border-box"></div>
<div class="t" style="left:1067.00px;top:457.00px;font-size:15.70px;font-weight:normal;color:#000;font-family:'Liberation Sans',sans-serif;">2002</div>
<div style="position:absolute;left:715px;top:482px;width:168px;height:28px;background:#fff;border:1px solid #d0d0d0;border-radius:3px;box-sizing:border-box"></div>
<div class="t" style="left:725.00px;top:488.00px;font-size:15.70px;font-weight:normal;color:#000;font-family:'Liberation Sans',sans-serif;">2003</div>
<div style="position:absolute;left:886px;top:482px;width:168px;height:28px;background:#b8cce4;border:1px solid #a6a6a6;border-radius:3px;box-sizing:border-box"></div>
<div class="t" style="left:896.00px;top:488.00px;font-size:15.70px;font-weight:normal;color:#000;font-family:'Liberation Sans',sans-serif;">2004</div>
<div style="position:absolute;left:1057px;top:482px;width:169px;height:28px;background:#fff;border:1px solid #d0d0d0;border-radius:3px;box-sizing:border-box"></div>
<div class="t" style="left:1067.00px;top:488.00px;font-size:15.70px;font-weight:normal;color:#000;font-family:'Liberation Sans',sans-serif;">2005</div>
<div style="position:absolute;left:715px;top:513px;width:168px;height:28px;background:#fff;border:1px solid #d0d0d0;border-radius:3px;box-sizing:border-box"></div>
<div class="t" style="left:725.00px;top:519.00px;font-size:15.70px;font-weight:normal;color:#000;font-family:'Liberation Sans',sans-serif;">2006</div>
<div style="position:absolute;left:886px;top:513px;width:168px;height:28px;background:#fff;border:1px solid #d0d0d0;border-radius:3px;box-sizing:border-box"></div>
<div class="t" style="left:896.00px;top:519.00px;font-size:15.70px;font-weight:normal;color:#000;font-family:'Liberation Sans',sans-serif;">2007</div>
<div style="position:absolute;left:1057px;top:513px;width:169px;height:28px;background:#fff;border:1px solid #d0d0d0;border-radius:3px;box-sizing:border-box"></div>
<div class="t" style="left:1067.00px;top:519.00px;font-size:15.70px;font-weight:normal;color:#000;font-family:'Liberation Sans',sans-serif;">2008</div>
<div style="position:absolute;left:715px;top:544px;width:168px;height:28px;background:#fff;border:1px solid #d0d0d0;border-radius:3px;box-sizing:border-box"></div>
<div class="t" style="left:725.00px;top:550.00px;font-size:15.70px;font-weight:normal;color:#000;font-family:'Liberation Sans',sans-serif;">2009</div>
<div style="position:absolute;left:1261px;top:411px;width:251px;height:540px;border:1px solid #9bbb59;box-sizing:border-box;background:#fff"></div>
<div class="t" style="left:1271.90px;top:419.00px;font-size:15.70px;font-weight:bold;color:#000;font-family:'Liberation Sans',sans-serif;transform:scaleX(0.8973);transform-origin:0 0;">Region</div>
<div style="position:absolute;left:1271px;top:441px;width:231px;height:1px;background:#9bbb59"></div>
<svg style="position:absolute;left:1481px;top:418px;" width="17" height="17" viewBox="0 0 17 17"><path d="M1 1 H12 V2.5 L7.5 7.5 H5.5 L1 2.5 Z" fill="#aaa"/>
<path d="M5.8 7 V11.5 H7.5" stroke="#aaa" stroke-width="1.3" fill="none"/>
<path d="M7.5 9 L15 15.5 M7.5 15.5 L15 9" stroke="#aaa" stroke-width="1.4"/></svg>
<div style="position:absolute;left:1271px;top:446px;width:231px;height:28px;background:#d7e4bd;border:1px solid #9a9a9a;border-radius:3px;box-sizing:border-box"></div>
<div class="t" style="left:1281.00px;top:452.00px;font-size:15.70px;font-weight:normal;color:#000;font-family:'Liberation Sans',sans-serif;">Arizona</div>
<div style="position:absolute;left:1271px;top:477px;width:231px;height:28px;background:#d7e4bd;border:1px solid #9a9a9a;border-radius:3px;box-sizing:border-box"></div>
<div class="t" style="left:1281.00px;top:483.00px;font-size:15.70px;font-weight:normal;color:#000;font-family:'Liberation Sans',sans-serif;">Atlanta</div>
<div style="position:absolute;left:1271px;top:508px;width:231px;height:28px;background:#d7e4bd;border:1px solid #9a9a9a;border-radius:3px;box-sizing:border-box"></div>
<div class="t" style="left:1281.00px;top:514.00px;font-size:15.70px;font-weight:normal;color:#000;font-family:'Liberation Sans',sans-serif;">Florida</div>
<div style="position:absolute;left:1271px;top:539px;width:231px;height:28px;background:#d7e4bd;border:1px solid #9a9a9a;border-radius:3px;box-sizing:border-box"></div>
<div class="t" style="left:1281.00px;top:545.00px;font-size:15.70px;font-weight:normal;color:#000;font-family:'Liberation Sans',sans-serif;">Illinois</div>
<div style="position:absolute;left:1271px;top:570px;width:231px;height:28px;background:#d7e4bd;border:1px solid #9a9a9a;border-radius:3px;box-sizing:border-box"></div>
<div class="t" style="left:1281.00px;top:576.00px;font-size:15.70px;font-weight:normal;color:#000;font-family:'Liberation Sans',sans-serif;">Indiana</div>
<div style="position:absolute;left:1271px;top:601px;width:231px;height:28px;background:#d7e4bd;border:1px solid #9a9a9a;border-radius:3px;box-sizing:border-box"></div>
<div class="t" style="left:1281.00px;top:607.00px;font-size:15.70px;font-weight:normal;color:#000;font-family:'Liberation Sans',sans-serif;">Michigan</div>
<div style="position:absolute;left:1271px;top:632px;width:231px;height:28px;background:#d7e4bd;border:1px solid #9a9a9a;border-radius:3px;box-sizing:border-box"></div>
<div class="t" style="left:1281.00px;top:638.00px;font-size:15.70px;font-weight:normal;color:#000;font-family:'Liberation Sans',sans-serif;">Missouri</div>
<div style="position:absolute;left:1271px;top:663px;width:231px;height:28px;background:#d7e4bd;border:1px solid #9a9a9a;border-radius:3px;box-sizing:border-box"></div>
<div class="t" style="left:1281.00px;top:669.00px;font-size:15.70px;font-weight:normal;color:#000;font-family:'Liberation Sans',sans-serif;">New Jersey</div>
<div style="position:absolute;left:1271px;top:694px;width:231px;height:28px;background:#d7e4bd;border:1px solid #9a9a9a;border-radius:3px;box-sizing:border-box"></div>
<div class="t" style="left:1281.00px;top:700.00px;font-size:15.70px;font-weight:normal;color:#000;font-family:'Liberation Sans',sans-serif;">No California</div>
<div style="position:absolute;left:1271px;top:725px;width:231px;height:28px;background:#d7e4bd;border:1px solid #9a9a9a;border-radius:3px;box-sizing:border-box"></div>
<div class="t" style="left:1281.00px;top:731.00px;font-size:15.70px;font-weight:normal;color:#000;font-family:'Liberation Sans',sans-serif;">Ohio</div>
<div style="position:absolute;left:1271px;top:756px;width:231px;height:28px;background:#d7e4bd;border:1px solid #9a9a9a;border-radius:3px;box-sizing:border-box"></div>
<div class="t" style="left:1281.00px;top:762.00px;font-size:15.70px;font-weight:normal;color:#000;font-family:'Liberation Sans',sans-serif;">Other</div>
<div style="position:absolute;left:1271px;top:787px;width:231px;height:28px;background:#d7e4bd;border:1px solid #9a9a9a;border-radius:3px;box-sizing:border-box"></div>
<div class="t" style="left:1281.00px;top:793.00px;font-size:15.70px;font-weight:normal;color:#000;font-family:'Liberation Sans',sans-serif;">So California</div>
<div style="position:absolute;left:1271px;top:818px;width:231px;height:28px;background:#d7e4bd;border:1px solid #9a9a9a;border-radius:3px;box-sizing:border-box"></div>
<div class="t" style="left:1281.00px;top:824.00px;font-size:15.70px;font-weight:normal;color:#000;font-family:'Liberation Sans',sans-serif;">Virginia</div>
<div style="position:absolute;left:1271px;top:849px;width:231px;height:28px;background:#d7e4bd;border:1px solid #9a9a9a;border-radius:3px;box-sizing:border-box"></div>
<div class="t" style="left:1281.00px;top:855.00px;font-size:15.70px;font-weight:normal;color:#000;font-family:'Liberation Sans',sans-serif;">Washington State</div>
<div style="position:absolute;left:1271px;top:880px;width:231px;height:28px;background:#ebf1de;border:1px solid #d0d0d0;border-radius:3px;box-sizing:border-box"></div>
<div class="t" style="left:1281.00px;top:886.00px;font-size:15.70px;font-weight:normal;color:#9a9a9a;font-family:'Liberation Sans',sans-serif;">Brighton Retail</div>
<div style="position:absolute;left:1271px;top:911px;width:231px;height:28px;background:#ebf1de;border:1px solid #d0d0d0;border-radius:3px;box-sizing:border-box"></div>
<div class="t" style="left:1281.00px;top:917.00px;font-size:15.70px;font-weight:normal;color:#9a9a9a;font-family:'Liberation Sans',sans-serif;">Colorado</div>
<div style="position:absolute;left:1271px;top:942px;width:231px;height:28px;background:#ebf1de;border:1px solid #d0d0d0;border-radius:3px;box-sizing:border-box"></div>
<div style="position:absolute;left:106px;top:619px;width:562px;height:316px;border:1px solid #d9d9d9;box-sizing:border-box;background:#fff"></div>
<div class="t" style="left:302.40px;top:636.00px;font-size:18.31px;font-weight:bold;color:#595959;font-family:'Liberation Sans',sans-serif;transform:scaleX(0.9702);transform-origin:0 0;">Revenues by region</div>
<div class="t" style="left:170.92px;top:829.00px;font-size:12.50px;font-weight:normal;color:#595959;font-family:'Liberation Sans',sans-serif;transform:scaleX(0.964);transform-origin:100% 0;">0 $</div>
<div class="t" style="left:157.02px;top:813.00px;font-size:12.50px;font-weight:normal;color:#595959;font-family:'Liberation Sans',sans-serif;transform:scaleX(0.964);transform-origin:100% 0;">100 $</div>
<div class="t" style="left:157.02px;top:797.00px;font-size:12.50px;font-weight:normal;color:#595959;font-family:'Liberation Sans',sans-serif;transform:scaleX(0.964);transform-origin:100% 0;">200 $</div>
<div class="t" style="left:157.02px;top:781.00px;font-size:12.50px;font-weight:normal;color:#595959;font-family:'Liberation Sans',sans-serif;transform:scaleX(0.964);transform-origin:100% 0;">300 $</div>
<div class="t" style="left:157.02px;top:765.00px;font-size:12.50px;font-weight:normal;color:#595959;font-family:'Liberation Sans',sans-serif;transform:scaleX(0.964);transform-origin:100% 0;">400 $</div>
<div class="t" style="left:157.02px;top:749.00px;font-size:12.50px;font-weight:normal;color:#595959;font-family:'Liberation Sans',sans-serif;transform:scaleX(0.964);transform-origin:100% 0;">500 $</div>
<div class="t" style="left:157.02px;top:733.00px;font-size:12.50px;font-weight:normal;color:#595959;font-family:'Liberation Sans',sans-serif;transform:scaleX(0.964);transform-origin:100% 0;">600 $</div>
<div class="t" style="left:157.02px;top:717.00px;font-size:12.50px;font-weight:normal;color:#595959;font-family:'Liberation Sans',sans-serif;transform:scaleX(0.964);transform-origin:100% 0;">700 $</div>
<div class="t" style="left:157.02px;top:701.00px;font-size:12.50px;font-weight:normal;color:#595959;font-family:'Liberation Sans',sans-serif;transform:scaleX(0.964);transform-origin:100% 0;">800 $</div>
<div class="t" style="left:157.02px;top:685.00px;font-size:12.50px;font-weight:normal;color:#595959;font-family:'Liberation Sans',sans-serif;transform:scaleX(0.964);transform-origin:100% 0;">900 $</div>
<div class="t" style="left:146.59px;top:669.00px;font-size:12.50px;font-weight:normal;color:#595959;font-family:'Liberation Sans',sans-serif;transform:scaleX(0.964);transform-origin:100% 0;">1,000 $</div>
<div class="t" style="left:134.5px;top:711.75px;width:0;height:0;"><div style="position:absolute;left:0;top:0;transform:translate(-50%,-50%) rotate(-90deg);white-space:pre;font-size:13.1px;color:#595959;line-height:1;font-family:Liberation Sans,sans-serif;">Thousands</div></div>
<div style="position:absolute;left:200px;top:835px;width:451px;height:1px;background:#d9d9d9"></div>
<div style="position:absolute;left:211.8px;top:775.0px;width:10.4px;height:59.8px;background:#4f81bd"></div>
<div style="position:absolute;left:213.8px;top:846px;width:0;height:0;"><div style="position:absolute;right:0;top:0;transform:rotate(-45deg);transform-origin:100% 0;white-space:pre;font-size:12.8px;color:#595959;line-height:1;font-family:'Liberation Sans',sans-serif;">Arizona</div></div>
<div style="position:absolute;left:243.87px;top:804.6999999999999px;width:10.4px;height:30.1px;background:#4f81bd"></div>
<div style="position:absolute;left:245.9px;top:846px;width:0;height:0;"><div style="position:absolute;right:0;top:0;transform:rotate(-45deg);transform-origin:100% 0;white-space:pre;font-size:12.8px;color:#595959;line-height:1;font-family:'Liberation Sans',sans-serif;">Atlanta</div></div>
<div style="position:absolute;left:275.94px;top:758.9px;width:10.4px;height:75.9px;background:#4f81bd"></div>
<div style="position:absolute;left:277.9px;top:846px;width:0;height:0;"><div style="position:absolute;right:0;top:0;transform:rotate(-45deg);transform-origin:100% 0;white-space:pre;font-size:12.8px;color:#595959;line-height:1;font-family:'Liberation Sans',sans-serif;">Florida</div></div>
<div style="position:absolute;left:308.01000000000005px;top:789.8px;width:10.4px;height:45px;background:#4f81bd"></div>
<div style="position:absolute;left:310.0px;top:846px;width:0;height:0;"><div style="position:absolute;right:0;top:0;transform:rotate(-45deg);transform-origin:100% 0;white-space:pre;font-size:12.8px;color:#595959;line-height:1;font-family:'Liberation Sans',sans-serif;">Illinois</div></div>
<div style="position:absolute;left:340.08px;top:804.6999999999999px;width:10.4px;height:30.1px;background:#4f81bd"></div>
<div style="position:absolute;left:342.1px;top:846px;width:0;height:0;"><div style="position:absolute;right:0;top:0;transform:rotate(-45deg);transform-origin:100% 0;white-space:pre;font-size:12.8px;color:#595959;line-height:1;font-family:'Liberation Sans',sans-serif;">Indiana</div></div>
<div style="position:absolute;left:372.15000000000003px;top:819.5999999999999px;width:10.4px;height:15.2px;background:#4f81bd"></div>
<div style="position:absolute;left:374.2px;top:846px;width:0;height:0;"><div style="position:absolute;right:0;top:0;transform:rotate(-45deg);transform-origin:100% 0;white-space:pre;font-size:12.8px;color:#595959;line-height:1;font-family:'Liberation Sans',sans-serif;">Michigan</div></div>
<div style="position:absolute;left:404.22px;top:789.1999999999999px;width:10.4px;height:45.6px;background:#4f81bd"></div>
<div style="position:absolute;left:406.2px;top:846px;width:0;height:0;"><div style="position:absolute;right:0;top:0;transform:rotate(-45deg);transform-origin:100% 0;white-space:pre;font-size:12.8px;color:#595959;line-height:1;font-family:'Liberation Sans',sans-serif;">Missouri</div></div>
<div style="position:absolute;left:436.29px;top:819.9px;width:10.4px;height:14.9px;background:#4f81bd"></div>
<div style="position:absolute;left:438.3px;top:846px;width:0;height:0;"><div style="position:absolute;right:0;top:0;transform:rotate(-45deg);transform-origin:100% 0;white-space:pre;font-size:12.8px;color:#595959;line-height:1;font-family:'Liberation Sans',sans-serif;">New Jersey</div></div>
<div style="position:absolute;left:468.36px;top:759.0999999999999px;width:10.4px;height:75.7px;background:#4f81bd"></div>
<div style="position:absolute;left:470.4px;top:846px;width:0;height:0;"><div style="position:absolute;right:0;top:0;transform:rotate(-45deg);transform-origin:100% 0;white-space:pre;font-size:12.8px;color:#595959;line-height:1;font-family:'Liberation Sans',sans-serif;">No California</div></div>
<div style="position:absolute;left:500.43px;top:789.9px;width:10.4px;height:44.9px;background:#4f81bd"></div>
<div style="position:absolute;left:502.4px;top:846px;width:0;height:0;"><div style="position:absolute;right:0;top:0;transform:rotate(-45deg);transform-origin:100% 0;white-space:pre;font-size:12.8px;color:#595959;line-height:1;font-family:'Liberation Sans',sans-serif;">Ohio</div></div>
<div style="position:absolute;left:532.5px;top:685.0999999999999px;width:10.4px;height:149.7px;background:#4f81bd"></div>
<div style="position:absolute;left:534.5px;top:846px;width:0;height:0;"><div style="position:absolute;right:0;top:0;transform:rotate(-45deg);transform-origin:100% 0;white-space:pre;font-size:12.8px;color:#595959;line-height:1;font-family:'Liberation Sans',sans-serif;">Other</div></div>
<div style="position:absolute;left:564.5699999999999px;top:684.0999999999999px;width:10.4px;height:150.7px;background:#4f81bd"></div>
<div style="position:absolute;left:566.6px;top:846px;width:0;height:0;"><div style="position:absolute;right:0;top:0;transform:rotate(-45deg);transform-origin:100% 0;white-space:pre;font-size:12.8px;color:#595959;line-height:1;font-family:'Liberation Sans',sans-serif;">So California</div></div>
<div style="position:absolute;left:596.64px;top:805.0px;width:10.4px;height:29.8px;background:#4f81bd"></div>
<div style="position:absolute;left:598.6px;top:846px;width:0;height:0;"><div style="position:absolute;right:0;top:0;transform:rotate(-45deg);transform-origin:100% 0;white-space:pre;font-size:12.8px;color:#595959;line-height:1;font-family:'Liberation Sans',sans-serif;">Virginia</div></div>
<div style="position:absolute;left:628.71px;top:805.0px;width:10.4px;height:29.8px;background:#4f81bd"></div>
<div style="position:absolute;left:630.7px;top:846px;width:0;height:0;"><div style="position:absolute;right:0;top:0;transform:rotate(-45deg);transform-origin:100% 0;white-space:pre;font-size:12.8px;color:#595959;line-height:1;font-family:'Liberation Sans',sans-serif;">Washington State</div></div>
<div style="position:absolute;left:682px;top:619px;width:562px;height:316px;border:1px solid #d9d9d9;box-sizing:border-box;background:#fff"></div>
<div class="t" style="left:861.00px;top:636.00px;font-size:18.31px;font-weight:bold;color:#595959;font-family:'Liberation Sans',sans-serif;transform:scaleX(0.9660);transform-origin:0 0;">Revenus - Top 10 stores</div>
<div style="position:absolute;left:847px;top:675px;width:1px;height:242px;background:#d9d9d9"></div>
<div class="t" style="left:732.60px;top:680.00px;font-size:13.52px;font-weight:normal;color:#595959;font-family:'Liberation Sans',sans-serif;transform:scaleX(0.8830);transform-origin:0 0;">Country Club Plaza</div>
<div style="position:absolute;left:848px;top:683.15px;width:338.4000000000001px;height:7.7px;background:#c0504d"></div>
<div style="position:absolute;left:1186.4px;top:676.0px;width:56.59999999999991px;height:22.5px;border:2px solid #000;box-sizing:border-box;background:#fff"></div>
<div class="t" style="left:1190.80px;top:681.00px;font-size:13.08px;font-weight:normal;color:#404040;font-family:'Liberation Sans',sans-serif;transform:scaleX(0.9272);transform-origin:0 0;">96,850 $</div>
<div class="t" style="left:741.30px;top:705.00px;font-size:13.52px;font-weight:normal;color:#595959;font-family:'Liberation Sans',sans-serif;transform:scaleX(0.9144);transform-origin:0 0;">Oakbrook Center</div>
<div style="position:absolute;left:848px;top:707.4499999999999px;width:312.20000000000005px;height:7.7px;background:#c0504d"></div>
<div style="position:absolute;left:1163.3px;top:700.3px;width:57.700000000000045px;height:22.5px;border:2px solid #000;box-sizing:border-box;background:#fff"></div>
<div class="t" style="left:1168.25px;top:705.00px;font-size:13.08px;font-weight:normal;color:#404040;font-family:'Liberation Sans',sans-serif;transform:scaleX(0.9272);transform-origin:0 0;">96,559 $</div>
<div class="t" style="left:757.00px;top:729.00px;font-size:13.52px;font-weight:normal;color:#595959;font-family:'Liberation Sans',sans-serif;transform:scaleX(0.8766);transform-origin:0 0;">Topanga Plaza</div>
<div style="position:absolute;left:848px;top:731.75px;width:276.70000000000005px;height:7.7px;background:#c0504d"></div>
<div style="position:absolute;left:1128.2px;top:724.6px;width:58.200000000000045px;height:22.5px;border:2px solid #000;box-sizing:border-box;background:#fff"></div>
<div class="t" style="left:1133.40px;top:730.00px;font-size:13.08px;font-weight:normal;color:#404040;font-family:'Liberation Sans',sans-serif;transform:scaleX(0.9272);transform-origin:0 0;">96,329 $</div>
<div class="t" style="left:749.30px;top:753.00px;font-size:13.52px;font-weight:normal;color:#595959;font-family:'Liberation Sans',sans-serif;transform:scaleX(0.8816);transform-origin:0 0;">Broadway Plaza</div>
<div style="position:absolute;left:848px;top:756.05px;width:267.9000000000001px;height:7.7px;background:#c0504d"></div>
<div style="position:absolute;left:1119px;top:748.9px;width:58.5px;height:22.5px;border:2px solid #000;box-sizing:border-box;background:#fff"></div>
<div class="t" style="left:1124.35px;top:754.00px;font-size:13.08px;font-weight:normal;color:#404040;font-family:'Liberation Sans',sans-serif;transform:scaleX(0.9272);transform-origin:0 0;">96,270 $</div>
<div class="t" style="left:750.00px;top:777.00px;font-size:13.52px;font-weight:normal;color:#595959;font-family:'Liberation Sans',sans-serif;transform:scaleX(0.9554);transform-origin:0 0;">Mall at Millenia</div>
<div style="position:absolute;left:848px;top:780.35px;width:251.70000000000005px;height:7.7px;background:#c0504d"></div>
<div style="position:absolute;left:1103.2px;top:773.2px;width:57.799999999999955px;height:22.5px;border:2px solid #000;box-sizing:border-box;background:#fff"></div>
<div class="t" style="left:1108.20px;top:778.00px;font-size:13.08px;font-weight:normal;color:#404040;font-family:'Liberation Sans',sans-serif;transform:scaleX(0.9272);transform-origin:0 0;">96,162 $</div>
<div class="t" style="left:751.10px;top:802.00px;font-size:13.52px;font-weight:normal;color:#595959;font-family:'Liberation Sans',sans-serif;transform:scaleX(0.9125);transform-origin:0 0;">Oxmoor Center</div>
<div style="position:absolute;left:848px;top:804.65px;width:201.29999999999995px;height:7.7px;background:#c0504d"></div>
<div style="position:absolute;left:1052.4px;top:797.5px;width:57.69999999999982px;height:22.5px;border:2px solid #000;box-sizing:border-box;background:#fff"></div>
<div class="t" style="left:1057.35px;top:803.00px;font-size:13.08px;font-weight:normal;color:#404040;font-family:'Liberation Sans',sans-serif;transform:scaleX(0.9272);transform-origin:0 0;">95,826 $</div>
<div class="t" style="left:727.30px;top:826.00px;font-size:13.52px;font-weight:normal;color:#595959;font-family:'Liberation Sans',sans-serif;transform:scaleX(0.8996);transform-origin:0 0;">Galleria at Roseville</div>
<div style="position:absolute;left:848px;top:828.9499999999999px;width:162.79999999999995px;height:7.7px;background:#c0504d"></div>
<div style="position:absolute;left:1015px;top:821.8px;width:57.40000000000009px;height:22.5px;border:2px solid #000;box-sizing:border-box;background:#fff"></div>
<div class="t" style="left:1019.80px;top:827.00px;font-size:13.08px;font-weight:normal;color:#404040;font-family:'Liberation Sans',sans-serif;transform:scaleX(0.9272);transform-origin:0 0;">95,580 $</div>
<div class="t" style="left:699.60px;top:850.00px;font-size:13.52px;font-weight:normal;color:#595959;font-family:'Liberation Sans',sans-serif;transform:scaleX(0.8908);transform-origin:0 0;">Stony Point Fashion Park</div>
<div style="position:absolute;left:848px;top:853.25px;width:162.79999999999995px;height:7.7px;background:#c0504d"></div>
<div style="position:absolute;left:1015px;top:846.1px;width:57.40000000000009px;height:22.5px;border:2px solid #000;box-sizing:border-box;background:#fff"></div>
<div class="t" style="left:1019.80px;top:851.00px;font-size:13.08px;font-weight:normal;color:#404040;font-family:'Liberation Sans',sans-serif;transform:scaleX(0.9272);transform-origin:0 0;">95,578 $</div>
<div class="t" style="left:787.60px;top:875.00px;font-size:13.52px;font-weight:normal;color:#595959;font-family:'Liberation Sans',sans-serif;transform:scaleX(0.8869);transform-origin:0 0;">U Village</div>
<div style="position:absolute;left:848px;top:877.55px;width:133.89999999999998px;height:7.7px;background:#c0504d"></div>
<div style="position:absolute;left:986.1px;top:870.4px;width:57.39999999999998px;height:22.5px;border:2px solid #000;box-sizing:border-box;background:#fff"></div>
<div class="t" style="left:990.90px;top:875.00px;font-size:13.08px;font-weight:normal;color:#404040;font-family:'Liberation Sans',sans-serif;transform:scaleX(0.9272);transform-origin:0 0;">95,389 $</div>
<div class="t" style="left:692.10px;top:899.00px;font-size:13.52px;font-weight:normal;color:#595959;font-family:'Liberation Sans',sans-serif;transform:scaleX(0.8834);transform-origin:0 0;">Scottsdale Fashion Square</div>
<div style="position:absolute;left:848px;top:901.85px;width:128.10000000000002px;height:7.7px;background:#c0504d"></div>
<div style="position:absolute;left:980px;top:894.7px;width:57px;height:22.5px;border:2px solid #000;box-sizing:border-box;background:#fff"></div>
<div class="t" style="left:984.60px;top:900.00px;font-size:13.08px;font-weight:normal;color:#404040;font-family:'Liberation Sans',sans-serif;transform:scaleX(0.9272);transform-origin:0 0;">95,350 $</div>
</body></html>
